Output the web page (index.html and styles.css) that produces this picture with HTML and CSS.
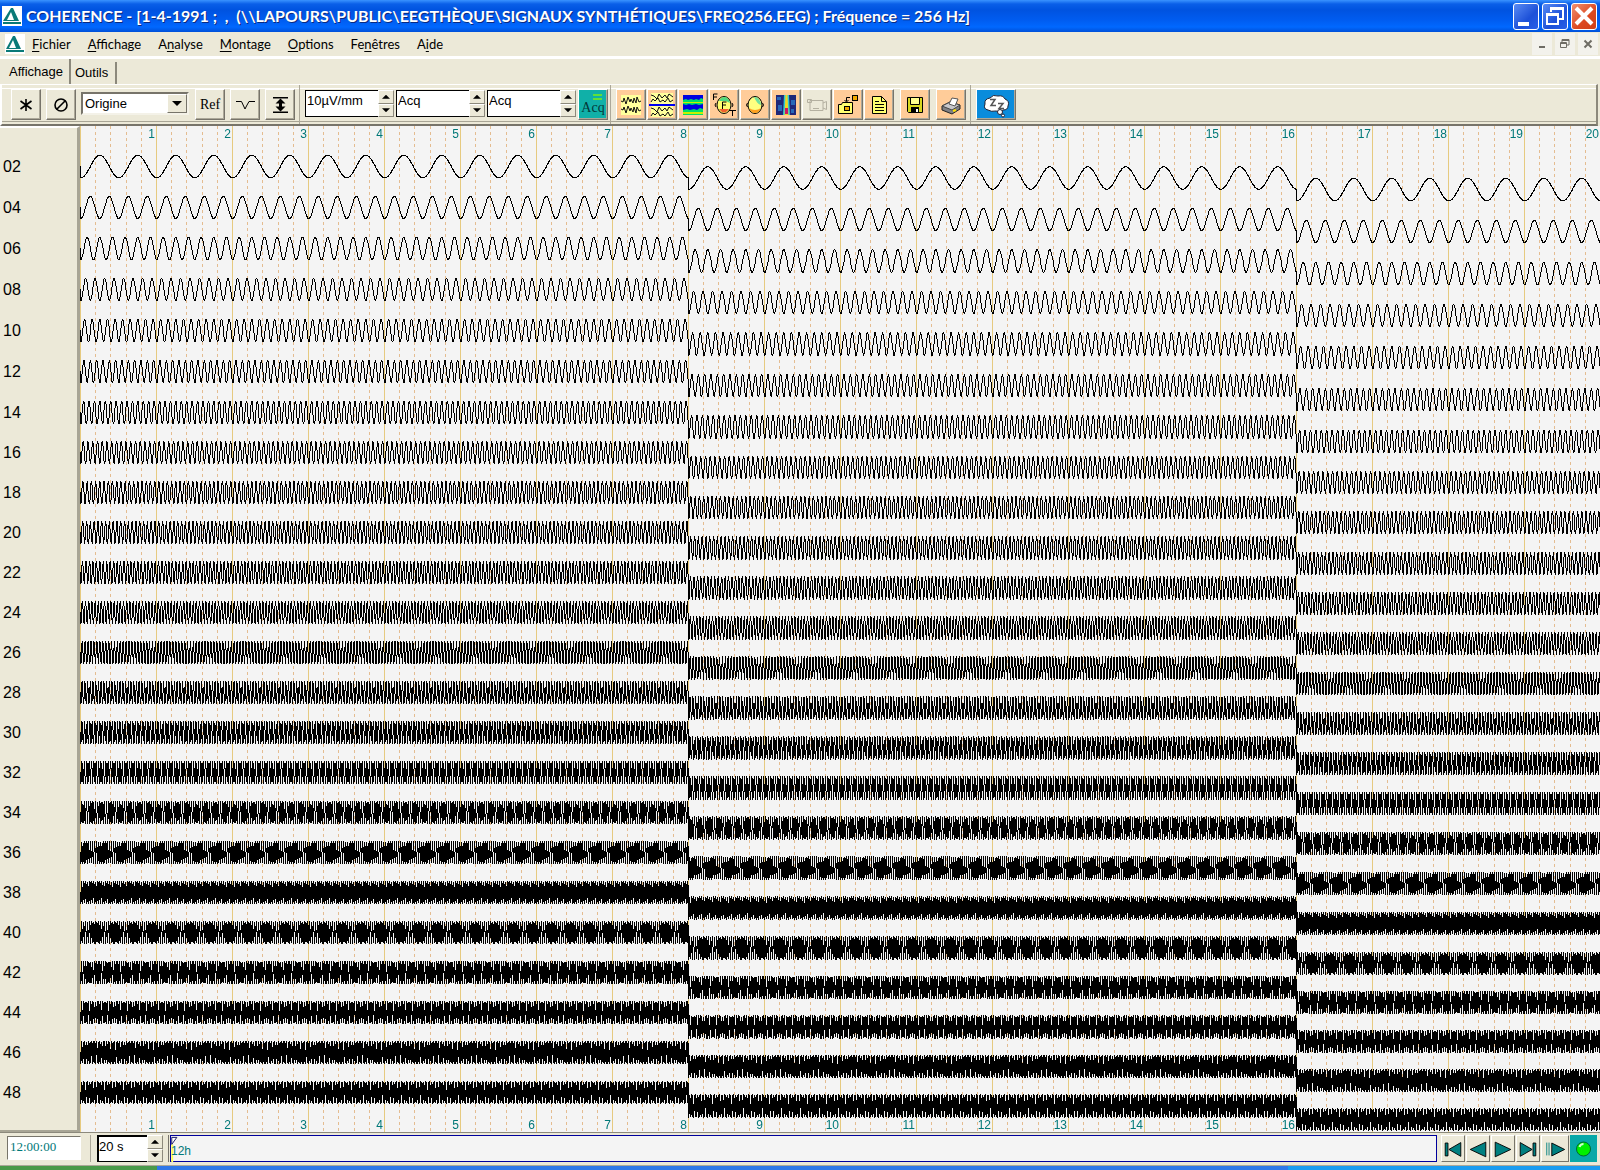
FILE: index.html
```html
<!DOCTYPE html>
<html lang="fr">
<head>
<meta charset="utf-8">
<meta name="viewport" content="width=device-width, initial-scale=1">
<title>COHERENCE</title>
<link rel="stylesheet" href="styles.css">
</head>
<body>
<header class="titlebar">
  <svg class="logo" viewBox="0 0 20 20" aria-hidden="true"><rect width="20" height="20" fill="#fff"/><path fill-rule="evenodd" d="M1 15 9 2h2l6 13zM5 14h7L9 6z" fill="#0a7a78"/><path d="M1 16h18v2H1z" fill="#0a7a78"/></svg>
  <h1 class="title">COHERENCE - [1-4-1991 ;&nbsp; ,&nbsp; (\\LAPOURS\PUBLIC\EEGTHÈQUE\SIGNAUX SYNTHÉTIQUES\FREQ256.EEG) ; Fréquence = 256 Hz]</h1>
  <div class="window-buttons">
    <button class="win" aria-label="Réduire"><svg viewBox="0 0 24 24"><path d="M4 18h11v4H4z" fill="#fff"/></svg></button>
    <button class="win" aria-label="Restaurer"><svg viewBox="0 0 24 24"><path d="M8 8V4h12v11h-4M8 5h12" fill="none" stroke="#fff" stroke-width="2"/><path d="M4 10h11v10H4zM4 11h11" fill="none" stroke="#fff" stroke-width="2"/></svg></button>
    <button class="win win-close" aria-label="Fermer"><svg viewBox="0 0 24 24"><path d="m4 4 16 16M20 4 4 20" stroke="#fff" stroke-width="4"/></svg></button>
  </div>
</header>

<nav class="menubar">
  <svg class="logo" viewBox="0 0 20 20" aria-hidden="true"><rect width="20" height="20" fill="#fff"/><path fill-rule="evenodd" d="M1 15 8 2h2l6 13zM4 14h7L8 6z" fill="#0a7a78"/><path d="M1 16h18v2H1z" fill="#0a7a78"/></svg>
  <a href="#"><u>F</u>ichier</a>
  <a href="#"><u>A</u>ffichage</a>
  <a href="#">A<u>n</u>alyse</a>
  <a href="#"><u>M</u>ontage</a>
  <a href="#"><u>O</u>ptions</a>
  <a href="#">Fe<u>n</u>êtres</a>
  <a href="#">A<u>i</u>de</a>
  <div class="child-buttons">
    <button class="child" aria-label="Réduire la fenêtre"><svg viewBox="0 0 20 20"><path d="M7 12h6v2H7z" fill="#6e6c64"/></svg></button>
    <button class="child" aria-label="Restaurer la fenêtre"><svg viewBox="0 0 20 20" fill="none" stroke="#6e6c64"><path d="M7 8V5.500h7V11h-2M7 6.500h7"/><path d="M5.500 8.500h6v5h-6zM5 9.500h7"/></svg></button>
    <button class="child" aria-label="Fermer la fenêtre"><svg viewBox="0 0 20 20"><path d="m6.500 6.500 7 7m0-7-7 7" stroke="#6e6c64" stroke-width="2"/></svg></button>
  </div>
</nav>

<div class="tabs">
  <button class="tab tab-on">Affichage</button>
  <button class="tab">Outils</button>
</div>

<div class="toolbar">
  <div class="group group-view">
    <button class="tool" aria-label="Marquer"><svg viewBox="0 0 26 26"><path d="M13 7v12M7.500 9l11 8M18.500 9l-11 8" stroke="#000" stroke-width="1.600"/></svg></button>
    <button class="tool" aria-label="Effacer"><svg viewBox="0 0 26 26" fill="none" stroke="#000" stroke-width="1.600"><circle cx="13" cy="13" r="6"/><path d="m8.500 17.500 9-9"/></svg></button>
    <div class="combo">
      <select aria-label="Montage"><option>Origine</option></select>
      <span class="combo-arrow" aria-hidden="true"></span>
    </div>
    <button class="tool ref">Ref</button>
    <button class="tool" aria-label="Filtre"><svg viewBox="0 0 26 26"><path d="M4 9.500h5.500L13 17l1.500-3L17 9.500h6" fill="none" stroke="#000"/></svg></button>
    <button class="tool" aria-label="Amplitude"><svg viewBox="0 0 26 26"><path d="M6 5h15v1.500H6zM6 19.500h15V21H6zM12 8h3v10h-3z"/><path d="m13.500 6.500 5 5h-10zM13.500 19.500l5-5h-10z"/></svg></button>
  </div>
  <div class="group group-fields">
    <div class="spin"><input aria-label="Sensibilité" value="10µV/mm"><span class="arrows"><button class="up" aria-label="Plus"></button><button class="down" aria-label="Moins"></button></span></div>
    <div class="spin"><input aria-label="Filtre bas" value="Acq"><span class="arrows"><button class="up" aria-label="Plus"></button><button class="down" aria-label="Moins"></button></span></div>
    <div class="spin"><input aria-label="Filtre haut" value="Acq"><span class="arrows"><button class="up" aria-label="Plus"></button><button class="down" aria-label="Moins"></button></span></div>
    <button class="tool acq"><svg viewBox="0 0 10 6" aria-hidden="true"><path d="M0 1h9M0 5h9" stroke="#5fe03a" stroke-width="2"/></svg>Acq</button>
  </div>
  <div class="group group-icons">
    <button class="tool peach" aria-label="Tracé"><svg viewBox="0 0 26 26"><rect x="3" y="3" width="20" height="20" fill="#ffff9c"/><path d="M3 9l2 1 1-4 2 6 2-7 2 5 1-3 2 4 1-5 2 5 1-6 2 5 2-1M3 17l2 1 1-3 2 6 2-7 2 5 1-3 2 4 1-5 2 6 1-6 2 4 2-1" fill="none" stroke="#111"/></svg></button>
    <button class="tool peach" aria-label="Double tracé"><svg viewBox="0 0 26 26"><rect x="2" y="1" width="22" height="24" fill="#ffff9c"/><path d="M2 3l3 1 3 3 2-5 3 4 3-3 2 3 2-4 4 3M2 10l2-3 2 2 3-3 2 4 3-2 2 2 3-4 2 4 3-2M2 16l3 1 3 3 2-5 3 4 3-3 2 3 2-4 4 3M2 24l2-3 2 2 3-3 2 4 3-2 2 2 3-4 2 4 3-2" fill="none" stroke="#111"/><path d="M0 12h26v2H0z" fill="#0000f0"/></svg></button>
    <button class="tool peach" aria-label="Spectre"><svg viewBox="0 0 26 26"><rect x="3" y="3" width="20" height="20" fill="#00e068"/><path d="M3 3h20v4l-2-1-2 2-3-1-2 1-3-1-3 1-2-1-3 1zM3 12l3 1 3-1 3 1 4-1 3 1 4-1v5l-3-1-3 2-3-1-4 1-3-1-4 1z" fill="#0000e0"/><path d="M3 10h20v1H3zM3 20h20v2H3z" fill="#c8f000"/></svg></button>
    <button class="tool peach" aria-label="Transformée de Fourier"><svg viewBox="0 0 26 26"><ellipse cx="13" cy="13" rx="7" ry="8.500" fill="#ffff70" stroke="#000"/><path d="M8 9q2-4 6-4 4 1 5 6l-4-2z" fill="#50d880"/><path d="M8 17h10q-5 7-10 0" fill="#f06030"/><path d="M5 11q-2 2 0 4M21 11q2 2 0 4M11.500 17v-7h4M11.500 13h3.500M2.500 8V2h4M2.500 5h3.500M18 18.500h7M21.500 18v6" fill="none" stroke="#000"/></svg></button>
    <button class="tool peach" aria-label="Cartographie"><svg viewBox="0 0 26 26"><ellipse cx="13" cy="13" rx="7" ry="8.500" fill="#ffff80" stroke="#000"/><path d="M12 5q6 0 7 8-4-1-7-8" fill="#70e0a0"/><path d="M7 16q2 5 6 5t6-5q-6 4-12 0" fill="#ffa020"/><path d="M5.500 11q-2 2 0 4M20.500 11q2 2 0 4" fill="none" stroke="#000"/></svg></button>
    <button class="tool peach" aria-label="Carte temps-fréquence"><svg viewBox="0 0 26 26"><rect x="3" y="3" width="20" height="20" fill="#202878"/><path d="M4 5h4v3H4zM5 13h4v6H5zM18 8h4v5h-4zM18 17h3v4h-3z" fill="#2868b8"/><path d="M11 3h5l1 20h-7z" fill="#30c8d0"/><path d="M12.500 3h2l1 20h-4z" fill="#f0d820"/><path d="M12 16h3v6h-3z" fill="#d01860"/></svg></button>
    <button class="tool" aria-label="Vidéo" disabled><svg viewBox="0 0 26 26" fill="none" stroke="#b4b0a0"><path d="M6 8.500h13v10H6zM3.500 7.500h4v3h-4zM19 11l3.500-1.500v8L19 16M9 16.500h6"/></svg></button>
    <button class="tool peach" aria-label="Exporter"><svg viewBox="0 0 26 26" stroke="#000"><path d="M3.500 12.500h3l1-2h10v11h-14z" fill="#ffff70"/><rect x="9.500" y="14.500" width="5" height="4" fill="#f0a800"/><rect x="17.500" y="3.500" width="5" height="5" fill="#f0a800"/><path d="M11.500 9V5.500H15M9.500 8l2 2 2-2" fill="none"/></svg></button>
    <button class="tool peach" aria-label="Rapport"><svg viewBox="0 0 26 26" stroke="#000"><path d="M6.500 4.500h9l5 5v12h-14z" fill="#ffff70"/><path d="M15.500 4.500v5h5M9 9.500h4M9 12.500h9M9 15.500h9M9 18.500h9" fill="none"/></svg></button>
    <button class="tool peach save" aria-label="Enregistrer"><svg viewBox="0 0 26 26"><path d="M5.500 5.500h15v15h-14l-1-1z" fill="#d8d820" stroke="#000"/><path d="M8.500 5.500h9v7h-9z" fill="#ffff90" stroke="#000"/><path d="M9 15h8v6H9z"/><path d="M14 17h2v3h-2z" fill="#fff"/></svg></button>
    <button class="tool peach print" aria-label="Imprimer"><svg viewBox="0 0 26 26"><path d="m4 14 8-4 10 3v4l-8 5-10-4z" fill="#808084" stroke="#222"/><path d="m4 14 8-4 10 3-8 5z" fill="#c8c8cc" stroke="#444"/><path d="m11 12 3-6 6 1-3 7z" fill="#fff" stroke="#555"/><path d="m15 19 3-1" stroke="#ffe000" stroke-width="2"/></svg></button>
  </div>
  <div class="group group-last">
    <button class="tool sleep" aria-label="Sommeil"><svg viewBox="0 0 36 26"><path d="M10 18q-5-1-3-6-1-5 5-6 3-4 8-2 5-1 7 3 5 2 3 7 0 4-5 4-3 3-7 1-5 1-8-1" fill="#fff" stroke="#223"/><circle cx="22" cy="20" r="2.500" fill="#fff" stroke="#223"/><circle cx="25" cy="23.500" r="1.500" fill="#fff" stroke="#223"/><path d="M12 7.500h5l-4 6h5M20 11.500h5l-4 5h5" fill="none" stroke="#555" stroke-width="1.500"/></svg></button>
  </div>
</div>

<main class="chart">
  <ol class="channels" id="channels"></ol>
  <div class="plot" id="plot">
    <canvas id="traces" role="img" aria-label="Signaux sinusoïdaux de 2 à 48 Hz"></canvas>
    <ol class="seconds" id="seconds-top"></ol>
    <ol class="seconds" id="seconds-bottom"></ol>
  </div>
</main>

<footer class="statusbar">
  <div class="clock-cell"><input class="clock" aria-label="Heure" value="12:00:00"></div>
  <div class="page-cell"><div class="spin"><input aria-label="Durée de page" value="20 s"><span class="arrows"><button class="up" aria-label="Plus"></button><button class="down" aria-label="Moins"></button></span></div></div>
  <div class="timeline"><svg class="flag" viewBox="0 0 8 28" aria-hidden="true"><path d="M0 9h2v19H0z" fill="#ffff50"/><path d="M.5 9V1.500H6z" fill="#fff" stroke="#101060"/></svg><span class="hour">12h</span></div>
  <div class="transport">
    <button class="nav" aria-label="Début"><svg viewBox="0 0 24 24"><path d="M3.500 5.500h3v14h-3zM20.500 5v15L7.500 12.500z"/></svg></button>
    <button class="nav" aria-label="Précédent"><svg viewBox="0 0 24 24"><path d="M20.500 4.500v16l-17-8z"/></svg></button>
    <button class="nav" aria-label="Suivant"><svg viewBox="0 0 24 24"><path d="M3.500 4.500v16l17-8z"/></svg></button>
    <button class="nav" aria-label="Fin"><svg viewBox="0 0 24 24"><path d="M17.500 5.500h3v14h-3zM3.500 5v15l13-7.500z"/></svg></button>
    <button class="nav nav-wide" aria-label="Lecture"><svg viewBox="0 0 24 24"><path d="M8.500 5.500v14l14-7z"/><path d="M3 5v14M5.500 5v14" stroke="#008080"/></svg></button>
    <button class="nav live" aria-label="En cours"><svg viewBox="0 0 24 24"><circle cx="12" cy="12" r="7" fill="#00f000" stroke="#063"/><path d="M8 10q1-3 4-3" fill="none" stroke="#d0ffd0" stroke-width="2"/></svg></button>
  </div>
</footer>
<div class="taskbar"></div>
<script src="traces.js"></script>
</body>
</html>
```
FILE: styles.css
```css
* { box-sizing: border-box; }

body {
  margin: 0;
  min-height: 100vh;
  display: flex;
  flex-direction: column;
  background: #ece9d8;
  color: #000;
  font: 13px/16px Lato, "Open Sans", sans-serif;
}

button, input, select { font: inherit; color: inherit; margin: 0; padding: 0; border-radius: 0; }
svg { display: block; }
ol { list-style: none; margin: 0; padding: 0; }

/* Title bar */
.titlebar {
  display: flex;
  align-items: center;
  height: 32px;
  padding: 0 3px 0 2px;
  gap: 4px;
  background: linear-gradient(#3a93ff 0, #0a5fe8 4px, #0053e0 10px, #005cf0 20px, #0068ff 27px, #0050d8 32px);
}
.logo { width: 20px; height: 20px; flex: none; }
.title {
  flex: 1;
  margin: 0;
  color: #fff;
  font: bold 16px/20px Lato, "Open Sans", sans-serif;
  white-space: nowrap;
  text-shadow: 1px 1px 0 #0a2a80;
}
.window-buttons { display: flex; gap: 3px; }
.win {
  width: 26px;
  height: 27px;
  border: 1px solid #fff;
  border-radius: 3px;
  background: linear-gradient(135deg, #5a8cf4, #1c50d8 60%, #2860e8);
}
.win-close { background: linear-gradient(135deg, #f09070, #dc4820 60%, #d04018); }

/* Menu bar */
.menubar {
  display: flex;
  align-items: center;
  height: 24px;
  padding: 0 2px 0 5px;
}
.menubar .logo { margin-right: 7px; }
.menubar a { color: #000; text-decoration: none; margin-right: 17px; }
.menubar u { text-underline-offset: 2px; }
.child-buttons { display: flex; gap: 3px; margin-left: auto; }
.child { width: 20px; height: 22px; border: 0; background: #f3f2ec; }

/* Tabs */
.tabs {
  display: flex;
  align-items: flex-end;
  height: 28px;
  padding: 0 0 0 3px;
  border-top: 3px solid #fff;
}
.tab {
  height: 22px;
  border: 0;
  border-right: 2px solid #8c897c;
  background: none;
  padding: 0 7px 0 4px;
  font: 13px/20px "Liberation Sans", Arial, sans-serif;
}
.tab-on { height: 25px; padding: 0 6px; }

/* Toolbar */
.toolbar {
  display: flex;
  height: 42px;
  margin-right: 2px;
  padding-left: 3px;
  border: solid;
  border-width: 1px 2px 2px;
  border-color: #fff #8c897c #77746a #fff;
  box-shadow: inset 0 3px 0 #ece9d8, inset 0 4px 0 #fff, inset 0 -2px 0 #ece9d8, inset 0 -3px 0 #a8a595;
}
.group { display: flex; padding-top: 4px; align-items: flex-start; }
.group-view { gap: 5px; padding-left: 6px; width: 295px; border-right: 1px solid #aca899; }
.group-fields { gap: 2px; padding-left: 5px; width: 311px; border-right: 1px solid #aca899; }
.group-icons { gap: 1px; padding-left: 5px; width: 360px; border-right: 1px solid #aca899; }
.group-last { padding-left: 5px; }
.group-fields .spin { width: 89px; }
.tool {
  width: 30px;
  height: 31px;
  flex: none;
  border: 1px solid;
  border-color: #fff #77746a #77746a #fff;
  box-shadow: inset -1px -1px 0 #aca899;
  background: #ece9d8;
}
.tool svg { width: 26px; height: 26px; margin: auto; }
.peach { background: #ffcc99; }
.save, .print { margin-left: 5px; }
.ref { font: 14px/16px "Liberation Serif", "Times New Roman", serif; }
.acq { background: #10b0a8; color: #043838; font: 14px/14px "Liberation Serif", "Times New Roman", serif; }
.acq svg { width: 10px; height: 6px; margin: 0 4px 1px auto; }
.sleep { width: 40px; background: #0a8cdc; }
.sleep svg { width: 36px; }

.combo { position: relative; width: 108px; height: 23px; margin: 3px 1px 0 0; }
.combo select {
  appearance: none;
  width: 100%;
  height: 100%;
  padding: 0 22px 0 2px;
  border: 2px solid;
  border-color: #77746a #f4f2e8 #f4f2e8 #77746a;
  background: #fff;
  font: 13px/16px "Liberation Sans", Arial, sans-serif;
}
.combo-arrow {
  position: absolute;
  top: 2px;
  right: 2px;
  width: 20px;
  height: 19px;
  pointer-events: none;
  border: 1px solid;
  border-color: #fff #77746a #77746a #fff;
  background: #ece9d8;
}
.combo-arrow::after {
  content: "";
  display: block;
  margin: 6px auto;
  width: 10px;
  height: 5px;
  background: #000;
  clip-path: polygon(0 0, 100% 0, 50% 100%);
}

.spin { display: flex; height: 27px; margin-top: 1px; }
.spin input {
  flex: 1;
  min-width: 0;
  padding: 0 0 6px 1px;
  border: 1px solid #000;
  border-width: 1px 0 1px 1px;
  background: #fff;
  font: 13px/18px "Liberation Sans", Arial, sans-serif;
}
.arrows { display: flex; flex-direction: column; width: 16px; }
.arrows button {
  flex: 1;
  border: 1px solid;
  border-color: #fff #8c897c #8c897c #fff;
  background: #ece9d8;
}
.arrows button::after {
  content: "";
  display: block;
  margin: auto;
  width: 8px;
  height: 4px;
  background: #000;
}
.up::after { clip-path: polygon(50% 0, 100% 100%, 0 100%); }
.down::after { clip-path: polygon(0 0, 100% 0, 50% 100%); }

/* Chart */
.chart { flex: 1; display: flex; }
.channels {
  width: 80px;
  flex: none;
  padding: 29px 0 0 3px;
  border-top: 2px solid #fff;
  border-right: 3px solid #a8a595;
  border-bottom: 2px solid #a8a595;
  font: 16px/20px "Liberation Sans", Arial, sans-serif;
}
.channels li { height: 40px; }
.channels li:nth-child(-n+6) { height: 41px; }
.plot {
  position: relative;
  flex: 1;
  min-width: 0;
  overflow: hidden;
  background: #f4f4f4;
  display: flex;
  flex-direction: column;
  justify-content: space-between;
}
.plot canvas { position: absolute; top: 0; left: 0; }
.seconds {
  position: relative;
  display: flex;
  padding-top: 1px;
  color: #007878;
  font: 12px/14px "Liberation Sans", Arial, sans-serif;
}
.seconds li { width: 76px; flex: none; padding-right: 1px; text-align: right; }

/* Status bar */
.statusbar {
  display: flex;
  height: 34px;
  padding: 2px 3px 3px 0;
  border-top: 1px solid #8c897c;
  border-bottom: 1px solid #aca899;
}
.clock-cell { width: 91px; padding: 1px 0 0 7px; border-right: 1px solid #aca899; }
.clock {
  display: block;
  width: 74px;
  height: 24px;
  padding: 0 0 2px 2px;
  border: 1px solid;
  border-color: #77746a #fff #fff #77746a;
  background: #fff;
  color: #007878;
  font: 13px/16px "Liberation Serif", "Times New Roman", serif;
}
.page-cell { width: 78px; padding: 0 5px 0 6px; border-right: 1px solid #77746a; }
.page-cell .spin { margin-top: 0; }
.page-cell .spin input { border: 1px solid #000; border-width: 2px 0 1px 2px; padding: 0 0 5px; }
.timeline {
  flex: 1;
  display: flex;
  margin-left: 1px;
  border: 1px solid #00009c;
  background: #f4f4f4;
  color: #007878;
}
.flag { width: 8px; height: 26px; margin-right: -8px; }
.hour { font: 12px/14px "Liberation Sans", Arial, sans-serif; padding-top: 8px; }
.transport { display: flex; gap: 1px; margin-left: 4px; }
.nav {
  width: 24px;
  height: 27px;
  border: 1px solid;
  border-color: #fff #77746a #77746a #fff;
  background: #ece9d8;
}
.nav svg { width: 22px; height: 24px; fill: #008080; stroke: #000; }
.nav-wide { width: 28px; }
.nav-wide svg { margin: auto; }
.live { width: 27px; border: 0; background: #08a8a8; }
.live svg { width: 27px; }
.taskbar {
  height: 4px;
  background: linear-gradient(90deg, #4a9a4a 0, #4a9a4a 157px, #2f78e8 157px, #2f78e8 1288px, #1a9cf0 1288px);
}
```
FILE: traces.js
```js
// Page geometry of the recording
const PX_PER_SECOND = 76;
const SAMPLE_RATE = 256;
const BLOCK_SECONDS = 8;
const ROWS = 24;

// Baseline drift of each channel per 8 s block, in half pixels
const DRIFT = [23, 24, 25, 26, 27, 28, 29, 30, 30, 31, 31, 31, 31, 31, 31, 31, 31, 31, 31, 31, 30, 29, 28, 27];

const baseline = row => row < 7 ? 40 + row * 41 : 326 + (row - 7) * 40;

const plot = document.getElementById('plot');
const canvas = document.getElementById('traces');
const ctx = canvas.getContext('2d');

function fillList(id, values) {
  const list = document.getElementById(id);
  for (const value of values) {
    const item = document.createElement('li');
    item.textContent = value;
    list.append(item);
  }
}

function drawGrid(width, height) {
  for (let k = 0; k * PX_PER_SECOND / 5 < width; k++) {
    const x = Math.round(k * PX_PER_SECOND / 5);
    if (k % 5 === 0) {
      ctx.fillStyle = '#e6ca80';
      ctx.fillRect(x, 0, 1, height);
    } else {
      ctx.fillStyle = '#e4bc90';
      for (let y = 0; y < height; y += 6) ctx.fillRect(x, y, 1, 3);
    }
  }
}

// Hard-edged line, one pixel wide
function line(x0, y0, x1, y1) {
  const dx = Math.abs(x1 - x0), dy = Math.abs(y1 - y0);
  const steps = Math.max(dx, dy);
  if (dx === 0) {
    ctx.fillRect(x0, Math.min(y0, y1), 1, dy + 1);
    return;
  }
  for (let i = 0; i <= steps; i++) {
    ctx.fillRect(Math.round(x0 + (x1 - x0) * i / steps), Math.round(y0 + (y1 - y0) * i / steps), 1, 1);
  }
}

// The first sample is zero; the sinusoid starts on the second one
function drawTrace(row, width) {
  const hz = 2 * (row + 1);
  const total = Math.ceil(width / PX_PER_SECOND * SAMPLE_RATE);
  let px = 0, py = baseline(row);
  for (let n = 1; n <= total; n++) {
    const t = (n - 1) / SAMPLE_RATE;
    const block = Math.floor(t / BLOCK_SECONDS);
    const x = Math.round(n / SAMPLE_RATE * PX_PER_SECOND);
    const y = Math.round(baseline(row) + block * DRIFT[row] / 2 + 11.3 * Math.cos(2 * Math.PI * hz * t));
    line(px, py, x, y);
    px = x;
    py = y;
  }
}

function draw() {
  const width = plot.clientWidth, height = plot.clientHeight;
  canvas.width = width;
  canvas.height = height;
  drawGrid(width, height);
  ctx.fillStyle = '#000';
  for (let row = 0; row < ROWS; row++) drawTrace(row, width);
}

fillList('channels', Array.from({ length: ROWS }, (_, i) => String(2 * (i + 1)).padStart(2, '0')));
fillList('seconds-top', Array.from({ length: 20 }, (_, i) => i + 1));
fillList('seconds-bottom', Array.from({ length: 16 }, (_, i) => i + 1));
draw();
window.addEventListener('resize', draw);
```
